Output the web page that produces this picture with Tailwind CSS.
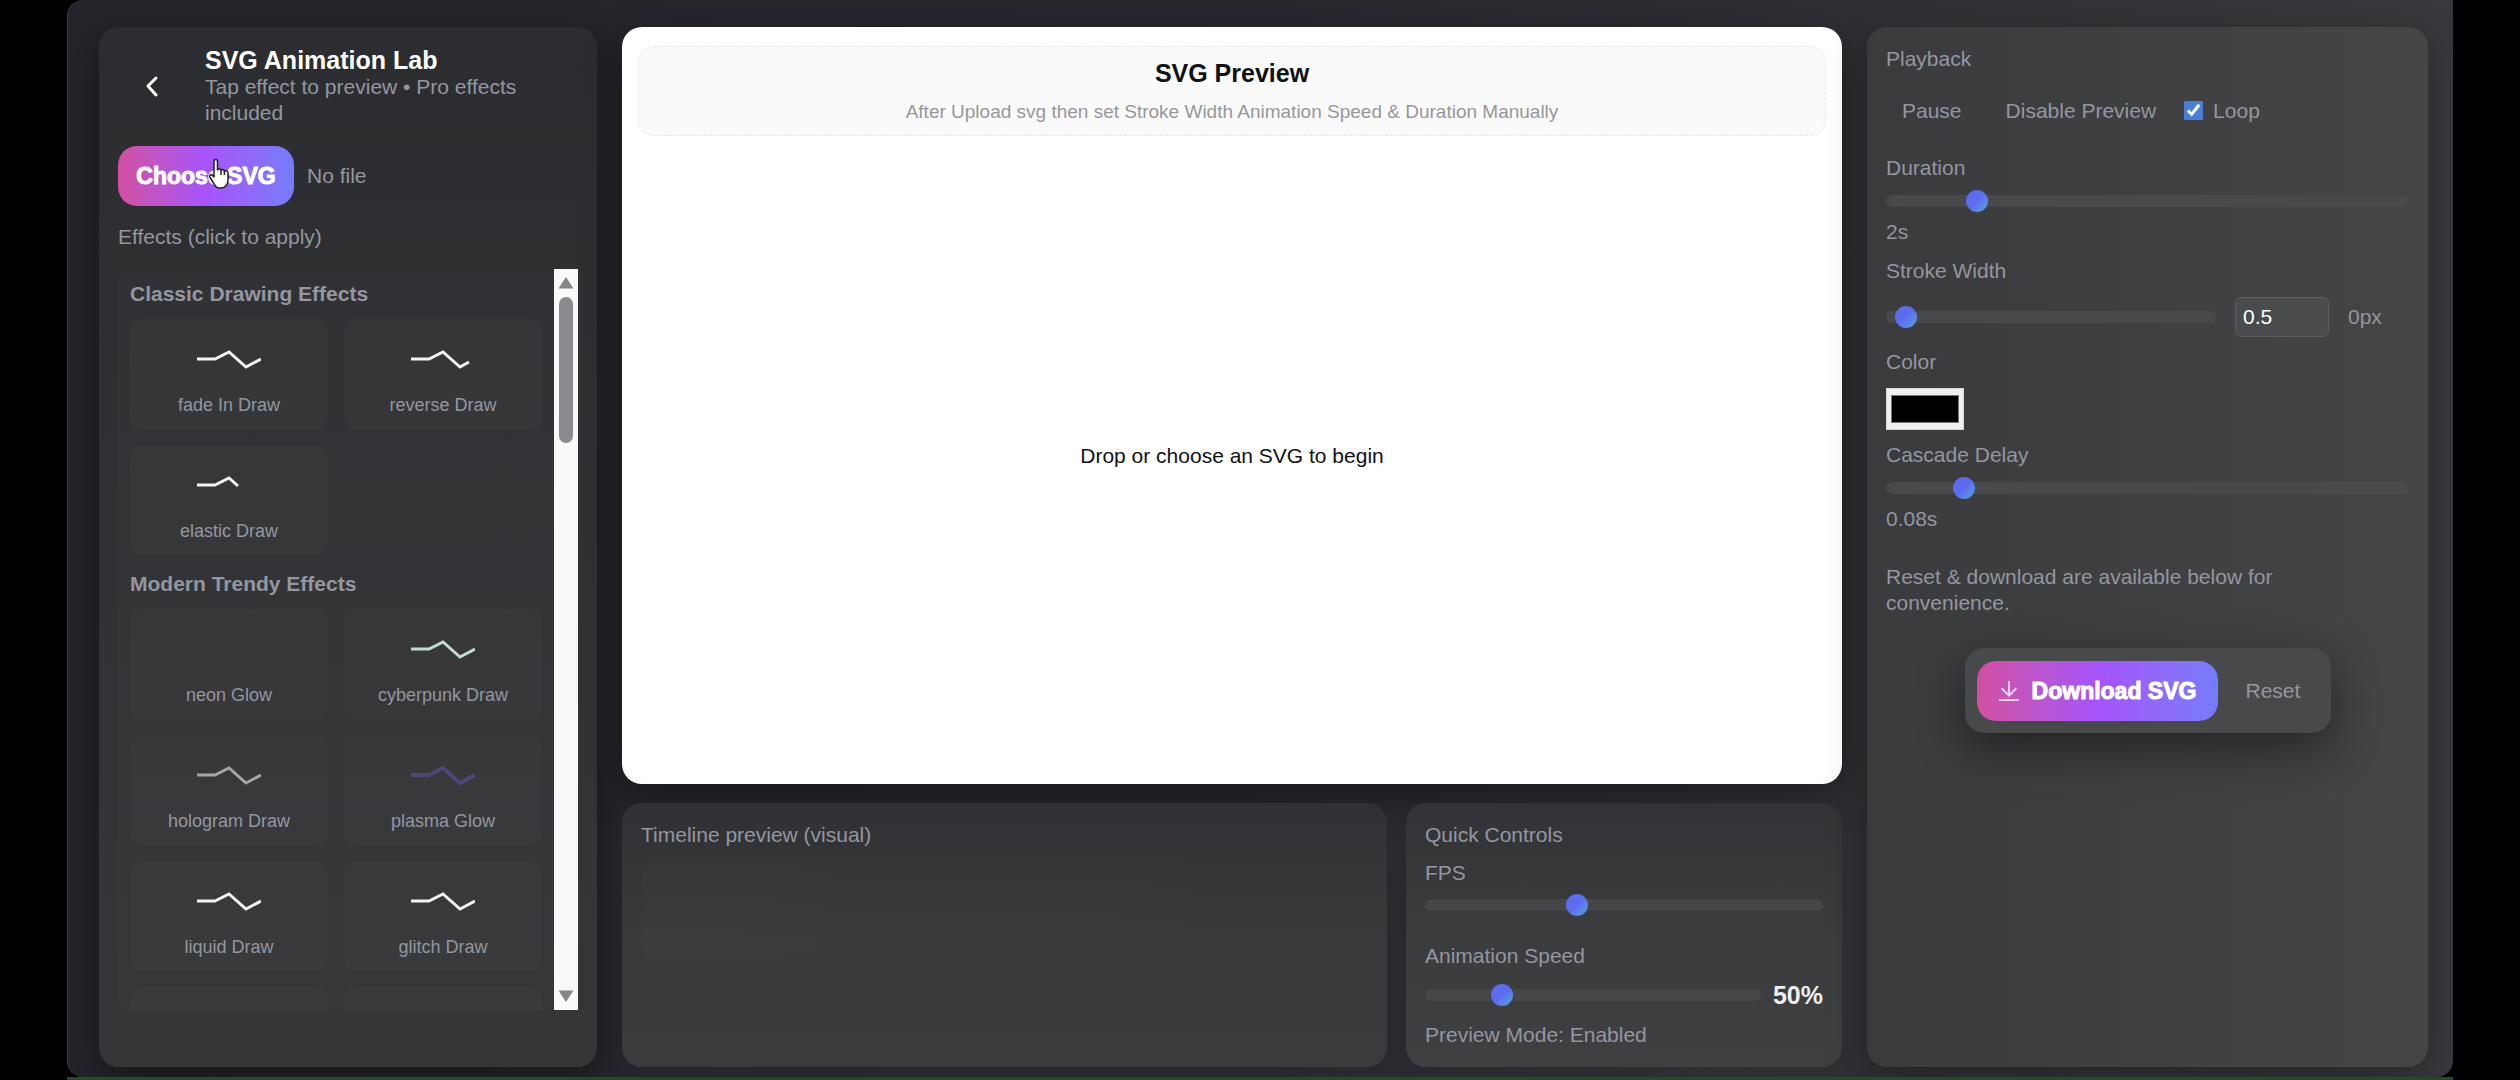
<!DOCTYPE html>
<html lang="en">
<head>
  <meta charset="UTF-8" />
  <meta name="viewport" content="width=device-width, initial-scale=1.0" />
  <title>SVG Animation Lab</title>
  <script src="https://cdn.jsdelivr.net/npm/@tailwindcss/browser@4"></script>
</head>
<body class="bg-black font-['Liberation_Sans',Arial,sans-serif] text-[21px] leading-[26px] text-[#9496a0]">
  <div class="h-screen pl-[67px] pr-[67px] flex flex-col">
    <div class="flex-1 min-h-0 grid grid-cols-[498px_minmax(0,1fr)_561px] gap-[25px] pt-[27px] pb-[10px] pl-[31px] pr-[25px] rounded-l-2xl rounded-br-2xl border-l border-[#3f4045] bg-linear-to-r from-[#24252b] via-[#27282d] to-[#38393c]">

      <!-- Effects -->
      <aside class="min-h-0 flex flex-col rounded-[20px] px-[19px] pt-[19px] pb-[57px] bg-linear-to-b from-[#2c2d30] to-[#353638] shadow-[0_12px_40px_rgba(0,0,0,0.4)]">
        <header class="flex items-center gap-5">
          <button class="w-[67px] h-[60px] shrink-0 flex items-center justify-center text-white" aria-label="Back">
            <svg class="w-4 h-6" viewBox="0 0 16 24" fill="none" stroke="currentColor" stroke-width="3" stroke-linecap="round" stroke-linejoin="round"><path d="M12 4 4 12l8 9" /></svg>
          </button>
          <div>
            <h1 class="text-[25px] leading-[28px] font-bold text-white">SVG Animation Lab</h1>
            <p>Tap effect to preview • Pro effects included</p>
          </div>
        </header>
        <div class="mt-5 flex items-center gap-[13px]">
          <button class="relative w-[176px] h-[60px] rounded-[19px] bg-linear-to-r from-[#d24fa0] via-[#a653fa] to-[#747cfb] text-white text-[23px] font-bold whitespace-nowrap [-webkit-text-stroke:1px_white]">
            Choose SVG
            <svg class="absolute left-[90px] top-3 w-[24px] h-[32px]" viewBox="0 0 24 32" fill="white" stroke="#222" stroke-width="1.5" stroke-linejoin="round"><path d="M6 19V3.500C6 .8 9.500.8 9.500 3.500V12c.5-2 3.500-1.600 3.500.5.700-1.600 3.400-1.200 3.400 1 .9-1.300 3.600-.8 3.600 1.500V22c0 4-2.500 8-6.500 8H11c-3 0-4.500-3-5.800-5.500L1.800 19c-.8-2 1.400-3.200 2.800-1.600Z" /><path d="M13 12.500V17M16.400 13.500V17" /></svg>
          </button>
          <span>No file</span>
        </div>
        <h2 class="mt-[18px]">Effects (click to apply)</h2>
        <div class="mt-[19px] flex-1 min-h-0 flex rounded-l-xl bg-white/1">
          <div id="effects" class="flex-1 min-h-0 overflow-hidden px-3 pt-3"></div>
          <div class="w-[24px] bg-[#f9f9f9] flex flex-col items-center py-2 text-[#858689]">
            <svg class="w-4 h-3" viewBox="0 0 16 12" fill="currentColor"><path d="M8 0 15.500 11.500H.5Z" /></svg>
            <div class="mt-2 w-[14px] h-[146px] rounded-full bg-[#8a8b8f]"></div>
            <svg class="mt-auto w-4 h-3" viewBox="0 0 16 12" fill="currentColor"><path d="M8 12 15.500.5H.5Z" /></svg>
          </div>
        </div>
      </aside>

      <!-- Preview -->
      <main class="min-h-0 flex flex-col gap-[19px]">
        <section class="flex-1 flex flex-col rounded-[20px] px-4 pt-[19px] bg-white text-[#111216] shadow-[0_12px_40px_rgba(0,0,0,0.4)]">
          <div class="h-[90px] rounded-[16px] border border-dashed border-[#e8e8e8] bg-[#fafafa] text-center pt-3">
            <h2 class="text-[25px] leading-[28px] font-bold">SVG Preview</h2>
            <p class="mt-3 text-[19px] text-[#97979a]">After Upload svg then set Stroke Width Animation Speed &amp; Duration Manually</p>
          </div>
          <div class="flex-1 flex items-center justify-center pb-2">Drop or choose an SVG to begin</div>
        </section>
        <div class="h-[264px] grid grid-cols-[minmax(0,1fr)_436px] gap-[19px]">
          <section class="rounded-[20px] p-[19px] bg-linear-to-b from-[#303134] via-[#38393b] to-[#3a3b3d]">
            <h2>Timeline preview (visual)</h2>
            <div class="mt-[14px] h-24 rounded-xl bg-linear-to-r from-white/1 to-transparent"></div>
          </section>
          <section class="rounded-[20px] p-[19px] bg-linear-to-b from-[#323336] via-[#3b3c3e] to-[#3f4042]">
            <h2>Quick Controls</h2>
            <label for="fps" class="block mt-3">FPS</label>
            <input id="fps" type="range" min="0" max="1000" value="374" class="block mt-[13px] w-full h-3 rounded-md appearance-none bg-[#454648] [&::-webkit-slider-thumb]:appearance-none [&::-webkit-slider-thumb]:size-[22px] [&::-webkit-slider-thumb]:rounded-full [&::-webkit-slider-thumb]:bg-linear-135 [&::-webkit-slider-thumb]:from-[#5d6bee] [&::-webkit-slider-thumb]:from-50% [&::-webkit-slider-thumb]:to-[#55a5dd]" />
            <label for="speed" class="block mt-8">Animation Speed</label>
            <div class="mt-[13px] flex items-center gap-3">
              <input id="speed" type="range" min="0" max="1000" value="210" class="flex-1 min-w-0 h-3 rounded-md appearance-none bg-[#454648] [&::-webkit-slider-thumb]:appearance-none [&::-webkit-slider-thumb]:size-[22px] [&::-webkit-slider-thumb]:rounded-full [&::-webkit-slider-thumb]:bg-linear-135 [&::-webkit-slider-thumb]:from-[#5d6bee] [&::-webkit-slider-thumb]:from-50% [&::-webkit-slider-thumb]:to-[#55a5dd]" />
              <output for="speed" class="text-[25px] font-bold text-[#eeeeef]">50%</output>
            </div>
            <p class="mt-[14px]">Preview Mode: Enabled</p>
          </section>
        </div>
      </main>

      <!-- Playback -->
      <aside class="min-h-0 rounded-[20px] p-[19px] bg-linear-to-r from-[#3a3b3d] to-[#444547] shadow-[0_12px_40px_rgba(0,0,0,0.3)]">
        <h2>Playback</h2>
        <div class="mt-[13px] flex items-center gap-3">
          <button class="h-[51px] px-4">Pause</button>
          <button class="h-[51px] px-4">Disable Preview</button>
          <label class="flex items-center gap-[10px]">
            <input type="checkbox" checked class="size-[19px] accent-[#4a7fd8]" />
            Loop
          </label>
        </div>
        <label for="duration" class="block mt-[19px]">Duration</label>
        <input id="duration" type="range" min="0" max="1000" value="160" class="block mt-[14px] w-full h-3 rounded-md appearance-none bg-[#48494b] [&::-webkit-slider-thumb]:appearance-none [&::-webkit-slider-thumb]:size-[22px] [&::-webkit-slider-thumb]:rounded-full [&::-webkit-slider-thumb]:bg-linear-135 [&::-webkit-slider-thumb]:from-[#5d6bee] [&::-webkit-slider-thumb]:from-50% [&::-webkit-slider-thumb]:to-[#55a5dd]" />
        <p class="mt-3">2s</p>
        <label for="stroke" class="block mt-[13px]">Stroke Width</label>
        <div class="mt-[13px] flex items-center gap-[19px]">
          <input id="stroke" type="range" min="0" max="1000" value="30" class="flex-1 min-w-0 h-3 rounded-md appearance-none bg-[#48494b] [&::-webkit-slider-thumb]:appearance-none [&::-webkit-slider-thumb]:size-[22px] [&::-webkit-slider-thumb]:rounded-full [&::-webkit-slider-thumb]:bg-linear-135 [&::-webkit-slider-thumb]:from-[#5d6bee] [&::-webkit-slider-thumb]:from-50% [&::-webkit-slider-thumb]:to-[#55a5dd]" />
          <input type="number" value="0.5" step="0.1" aria-label="Stroke width value" class="w-[94px] h-10 rounded-md border border-[#5c5d5f] bg-[#4a4b4c] px-[7px] text-white" />
          <span class="w-[61px]">0px</span>
        </div>
        <label for="color" class="block mt-3">Color</label>
        <input id="color" type="color" value="#000000" class="block mt-[13px] w-[78px] h-[42px] border border-[#d8d8d8] bg-[#f0f0f0] px-1 py-[6px] [&::-webkit-color-swatch-wrapper]:p-0 [&::-webkit-color-swatch]:border [&::-webkit-color-swatch]:border-[#777777]" />
        <label for="cascade" class="block mt-3">Cascade Delay</label>
        <input id="cascade" type="range" min="0" max="1000" value="134" class="block mt-[14px] w-full h-3 rounded-md appearance-none bg-[#48494b] [&::-webkit-slider-thumb]:appearance-none [&::-webkit-slider-thumb]:size-[22px] [&::-webkit-slider-thumb]:rounded-full [&::-webkit-slider-thumb]:bg-linear-135 [&::-webkit-slider-thumb]:from-[#5d6bee] [&::-webkit-slider-thumb]:from-50% [&::-webkit-slider-thumb]:to-[#55a5dd]" />
        <p class="mt-3">0.08s</p>
        <p class="mt-8 max-w-[440px]">Reset &amp; download are available below for convenience.</p>
        <div class="mt-8 mx-auto w-[366px] h-[85px] rounded-[19px] bg-[#48494a] px-3 flex items-center gap-3 shadow-[0_16px_48px_rgba(0,0,0,0.45)]">
          <button class="w-[241px] h-[60px] rounded-[19px] flex items-center justify-center gap-3 bg-linear-to-r from-[#d24fa0] via-[#a653fa] to-[#747cfb] text-white text-[23px] font-bold whitespace-nowrap [-webkit-text-stroke:1px_white]">
            <svg class="w-[22px] h-[24px]" viewBox="0 0 24 24" fill="none" stroke="#ecdcff" stroke-width="2"><path d="M12 1v16M4 9l8 8 8-8M1 22h22" /></svg>
            Download SVG
          </button>
          <button class="px-4">Reset</button>
        </div>
      </aside>
    </div>
    <div class="h-[3px] bg-[#264a28]"></div>
  </div>

  <script>
    const full = "M0 11H18L32 4L49 19L64 11";
    const groups = [
      {
        title: "Classic Drawing Effects",
        items: [
          { name: "fade In Draw", path: full, color: "#f4f4f4" },
          { name: "reverse Draw", path: "M0 11H18L32 4L49 19L58 14", color: "#f4f4f4" },
          { name: "elastic Draw", path: "M0 11H18L32 4L41 12", color: "#f4f4f4" },
        ],
      },
      {
        title: "Modern Trendy Effects",
        items: [
          { name: "neon Glow", path: "", color: "none" },
          { name: "cyberpunk Draw", path: full, color: "#c3dcd4" },
          { name: "hologram Draw", path: full, color: "#a5a6a8" },
          { name: "plasma Glow", path: full, color: "#4d4679", width: 4 },
          { name: "liquid Draw", path: full, color: "#f4f4f4" },
          { name: "glitch Draw", path: full, color: "#f4f4f4" },
          { name: "", path: "", color: "none" },
          { name: "", path: "", color: "none" },
        ],
      },
    ];

    const list = document.getElementById("effects");
    groups.forEach((group) => {
      const section = document.createElement("section");
      section.className = "mb-4";
      section.innerHTML = `
        <h3 class="font-bold mb-3">${group.title}</h3>
        <div class="grid grid-cols-2 gap-x-4 gap-y-4">
          ${group.items.map((item) => `
            <button class="h-[110px] rounded-xl bg-white/2 flex flex-col items-center pt-[29px] text-[18px] leading-[22px]">
              <svg class="w-[64px] h-[22px] mb-6" viewBox="0 0 64 22" fill="none" stroke="${item.color}" stroke-width="${item.width || 3}"><path d="${item.path}" /></svg>
              ${item.name}
            </button>`).join("")}
        </div>`;
      list.appendChild(section);
    });
  </script>
</body>
</html>
